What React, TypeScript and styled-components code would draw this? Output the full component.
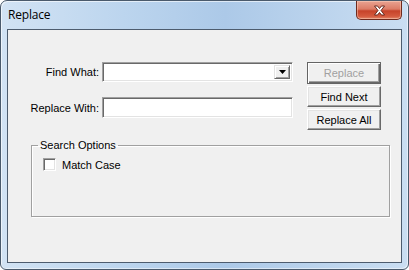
import React from "react";
import styled, { createGlobalStyle } from "styled-components";

const GlobalStyle = createGlobalStyle`
    html, body {
        margin: 0;
        padding: 0;
        background: #ffffff;
    }
`;

const Window = styled.div`
    box-sizing: border-box;
    width: 409px;
    height: 270px;
    display: flex;
    flex-direction: column;
    padding: 0 6px 6px 6px;
    border: 1px solid #4a5a6c;
    border-radius: 7px 7px 6px 6px;
    background: linear-gradient(to right, #d2e3f4 0%, #bcd5ee 30%, #acc9e8 55%, #b9d2ec 75%, #cadef2 100%);
    box-shadow: inset 1px 1px 0 rgba(255, 255, 255, 0.6), inset -1px -1px 0 rgba(255, 255, 255, 0.5);
    font-family: "Liberation Sans", Arial, sans-serif;
`;

const TitleBar = styled.div`
    height: 28px;
    display: flex;
    justify-content: space-between;
    align-items: flex-start;
    margin: 0 -6px;
    padding-left: 7px;
`;

const Title = styled.span`
    font-family: "Segoe UI", "Open Sans", sans-serif;
    font-size: 12px;
    color: #000;
    line-height: 28px;
    letter-spacing: -0.2px;
`;

const CloseButton = styled.div`
    width: 46px;
    height: 19px;
    margin-right: 6px;
    display: flex;
    align-items: center;
    justify-content: center;
    box-sizing: border-box;
    border: 1px solid #6e2a1e;
    border-top: none;
    border-radius: 0 0 5px 5px;
    background: linear-gradient(to bottom, #e9a392 0%, #dc7c66 45%, #c6432a 55%, #d45a3e 85%, #e2876b 100%);
    box-shadow: inset 0 0 0 1px rgba(255, 220, 200, 0.45);
`;

const Client = styled.div`
    flex: 1;
    box-sizing: border-box;
    border: 1px solid #4d5c6e;
    background: #f0f0f0;
    padding-top: 32px;
`;

const TopRow = styled.div`
    display: flex;
    align-items: flex-start;
`;

const Fields = styled.div`
    display: grid;
    grid-template-columns: 91px 191px;
    column-gap: 3px;
    row-gap: 15px;
    align-items: center;
`;

const Label = styled.label`
    text-align: right;
    font-size: 11px;
    color: #000;
    white-space: nowrap;
`;

const Sunken = styled.div<{ $h: number }>`
    box-sizing: border-box;
    height: ${(p) => p.$h}px;
    background: #fff;
    border-style: solid;
    border-width: 1px;
    border-color: #a0a0a0 #ffffff #ffffff #a0a0a0;
    box-shadow: inset 1px 1px 0 #696969, inset -1px -1px 0 #e3e3e3;
    display: flex;
    justify-content: flex-end;
    padding: 2px;
`;

const DropButton = styled.div`
    box-sizing: border-box;
    width: 16px;
    height: 100%;
    background: #f0f0f0;
    border-style: solid;
    border-width: 1px;
    border-color: #e3e3e3 #696969 #696969 #e3e3e3;
    box-shadow: inset 1px 1px 0 #ffffff, inset -1px -1px 0 #a0a0a0;
    display: flex;
    align-items: center;
    justify-content: center;
`;

const Buttons = styled.div`
    margin-left: 14px;
    width: 74px;
    display: flex;
    flex-direction: column;
    gap: 2px;
`;

const Button = styled.div<{ $default?: boolean; $disabled?: boolean }>`
    box-sizing: border-box;
    height: ${(p) => (p.$default ? 22 : 21)}px;
    display: flex;
    align-items: center;
    justify-content: center;
    font-size: 11px;
    color: ${(p) => (p.$disabled ? "#a0a0a0" : "#000")};
    background: #f0f0f0;
    border-style: solid;
    border-width: 1px;
    border-color: ${(p) => (p.$default ? "#646464" : "#ffffff #696969 #696969 #ffffff")};
    box-shadow: ${(p) =>
        p.$default
            ? "inset 1px 1px 0 #ffffff, inset -1px -1px 0 #696969, inset -2px -2px 0 #a0a0a0"
            : "inset -1px -1px 0 #a0a0a0, inset 1px 1px 0 #e3e3e3"};
`;

const Group = styled.fieldset`
    box-sizing: border-box;
    margin: 9px 0 0 23px;
    width: 359px;
    height: 78px;
    padding: 0;
    border: 1px solid #a0a0a0;
    box-shadow: inset 1px 1px 0 #ffffff, 1px 1px 0 #ffffff;
`;

const Legend = styled.legend`
    margin-left: 6px;
    padding: 0 2px;
    font-size: 11px;
    line-height: 13px;
    color: #000;
`;

const CheckRow = styled.div`
    display: flex;
    align-items: center;
    gap: 6px;
    margin: 6px 0 0 11px;
    font-size: 11px;
    color: #000;
`;

const CheckBox = styled.div`
    box-sizing: border-box;
    width: 13px;
    height: 13px;
    background: #fff;
    border-style: solid;
    border-width: 1px;
    border-color: #a0a0a0 #ffffff #ffffff #a0a0a0;
    box-shadow: inset 1px 1px 0 #696969, inset -1px -1px 0 #e3e3e3;
`;

const CloseGlyph = () => (
    <svg width="13" height="11" viewBox="0 0 13 11">
        <path
            d="M1.5 1 L4.5 1 L6.5 3.5 L8.5 1 L11.5 1 L8 5.5 L11.5 10 L8.5 10 L6.5 7.5 L4.5 10 L1.5 10 L5 5.5 Z"
            fill="#ffffff"
            stroke="#5a1e14"
            strokeWidth="0.9"
            strokeLinejoin="round"
        />
    </svg>
);

const Arrow = () => (
    <svg width="7" height="4" viewBox="0 0 7 4">
        <path d="M0 0 H7 L3.5 4 Z" fill="#000" />
    </svg>
);

const App = () => {
    return (
        <>
            <GlobalStyle />
            <Window>
                <TitleBar>
                    <Title>Replace</Title>
                    <CloseButton>
                        <CloseGlyph />
                    </CloseButton>
                </TitleBar>
                <Client>
                    <TopRow>
                        <Fields>
                            <Label>Find What:</Label>
                            <Sunken $h={20}>
                                <DropButton>
                                    <Arrow />
                                </DropButton>
                            </Sunken>
                            <Label>Replace With:</Label>
                            <Sunken $h={21} />
                        </Fields>
                        <Buttons>
                            <Button $default $disabled>Replace</Button>
                            <Button>Find Next</Button>
                            <Button>Replace All</Button>
                        </Buttons>
                    </TopRow>
                    <Group>
                        <Legend>Search Options</Legend>
                        <CheckRow>
                            <CheckBox />
                            <span>Match Case</span>
                        </CheckRow>
                    </Group>
                </Client>
            </Window>
        </>
    );
};

export default App;
